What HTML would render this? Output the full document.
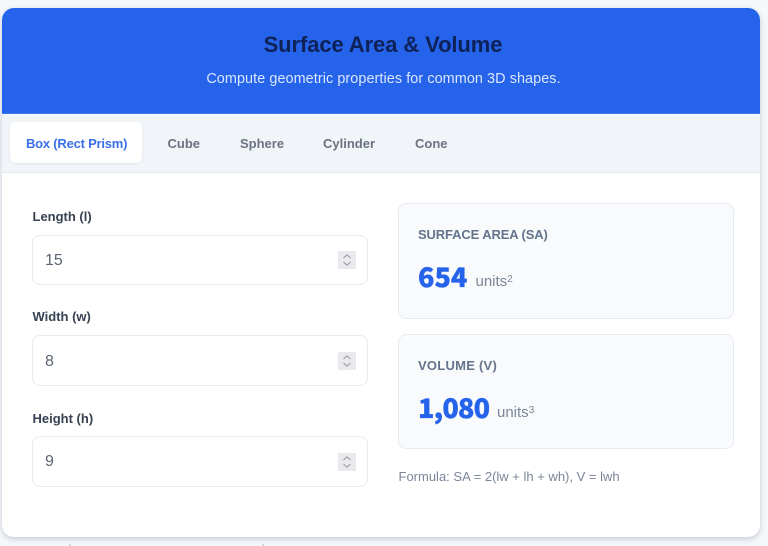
<!DOCTYPE html>
<html lang="en">
<head>
<meta charset="utf-8">
<title>Surface Area &amp; Volume</title>
<style>
html,body{margin:0;padding:0;width:768px;height:546px;overflow:hidden;background:#f5f7fa;font-family:"Liberation Sans",sans-serif}
.card{position:absolute;left:2px;top:8px;width:758px;height:529px;background:#fff;border-radius:12px;box-shadow:0 2px 6px rgba(100,116,139,.32);overflow:hidden}
.abs{position:absolute;white-space:nowrap}
.head{position:absolute;left:0;top:0;width:758px;height:105px;background:#2563eb}
.tabs{position:absolute;left:0;top:105px;width:758px;height:58px;background:#f1f4f9;border-bottom:1px solid #e4e9f0;border-top:1px solid #3f76ee}
.active{position:absolute;left:8px;top:114px;width:132px;height:41px;background:#fff;border-radius:6px;box-shadow:0 1px 2px rgba(0,0,0,.07)}
.tab{font-size:13px;font-weight:bold;color:#6b7280;line-height:16px;top:127.5px}
.label{font-size:13px;font-weight:bold;color:#374151;line-height:16px;left:30.5px}
.input{position:absolute;left:30px;width:334px;background:#fff;border:1px solid #e5eaf1;border-radius:8px}
.val{font-size:16px;color:#5b6472;line-height:20px;left:43px}
.spin{position:absolute;left:336px;width:18px;height:18px;background:#e9e9ee}
.box{position:absolute;left:396px;width:334px;background:#f8fafc;border:1px solid #e7ebf2;border-radius:8px}
.rl{font-size:13px;font-weight:bold;color:#64748b;line-height:16px;left:416px}
.num{font-family:"Noto Sans CJK JP","DejaVu Sans",sans-serif;font-size:27px;font-weight:900;color:#2563eb;line-height:30px;left:416px;-webkit-text-stroke:.35px #2563eb}
.unit{font-size:15px;color:#7b8698;line-height:18px}
.unit sup{font-size:10px;line-height:0;vertical-align:4px}
</style>
</head>
<body>
<div class="abs" style="left:69px;top:544px;width:2px;height:2px;background:#d5d9df"></div>
<div class="abs" style="left:262px;top:544px;width:2px;height:2px;background:#d5d9df"></div>
<div class="card">
  <div class="head"></div>
  <div class="abs" style="left:0;width:762px;top:22px;text-align:center;font-size:22px;font-weight:bold;color:#0f2257;line-height:30px;letter-spacing:-.1px">Surface Area &amp; Volume</div>
  <div class="abs" style="left:0;width:763px;top:62px;text-align:center;font-size:14.4px;color:#dbe6ff;line-height:18px;letter-spacing:.08px">Compute geometric properties for common 3D shapes.</div>
  <div class="tabs"></div>
  <div class="active"></div>
  <div class="abs tab" style="left:24px;color:#3b6fe8;letter-spacing:-.22px">Box (Rect Prism)</div>
  <div class="abs tab" style="left:165.5px">Cube</div>
  <div class="abs tab" style="left:238px">Sphere</div>
  <div class="abs tab" style="left:321px">Cylinder</div>
  <div class="abs tab" style="left:413px">Cone</div>

  <div class="abs label" style="top:201px">Length (l)</div>
  <div class="input" style="top:227px;height:48px"></div>
  <div class="abs val" style="top:243px">15</div>
  <div class="spin" style="top:243px"><svg width="18" height="18" viewBox="0 0 18 18"><path d="M5.5 7 9 3.8 12.5 7M5.5 11 9 14.2 12.5 11" fill="none" stroke="#93969f" stroke-width="1"/></svg></div>

  <div class="abs label" style="top:301px">Width (w)</div>
  <div class="input" style="top:327px;height:49px"></div>
  <div class="abs val" style="top:344px">8</div>
  <div class="spin" style="top:344px"><svg width="18" height="18" viewBox="0 0 18 18"><path d="M5.5 7 9 3.8 12.5 7M5.5 11 9 14.2 12.5 11" fill="none" stroke="#93969f" stroke-width="1"/></svg></div>

  <div class="abs label" style="top:403px">Height (h)</div>
  <div class="input" style="top:428px;height:49px"></div>
  <div class="abs val" style="top:444px">9</div>
  <div class="spin" style="top:445px"><svg width="18" height="18" viewBox="0 0 18 18"><path d="M5.5 7 9 3.8 12.5 7M5.5 11 9 14.2 12.5 11" fill="none" stroke="#93969f" stroke-width="1"/></svg></div>

  <div class="box" style="top:195px;height:114px"></div>
  <div class="abs rl" style="top:219px;letter-spacing:-.13px">SURFACE AREA (SA)</div>
  <div class="abs num" style="top:253px">654</div>
  <div class="abs unit" style="left:473.5px;top:265px">units<sup>2</sup></div>

  <div class="box" style="top:326px;height:113px"></div>
  <div class="abs rl" style="top:350px;letter-spacing:.25px">VOLUME (V)</div>
  <div class="abs num" style="top:384px;letter-spacing:-.8px">1,080</div>
  <div class="abs unit" style="left:495px;top:396px">units<sup>3</sup></div>

  <div class="abs" style="left:396.5px;top:461px;font-size:13px;color:#7b8698;line-height:16px">Formula: SA = 2(lw + lh + wh), V = lwh</div>
</div>
</body>
</html>
